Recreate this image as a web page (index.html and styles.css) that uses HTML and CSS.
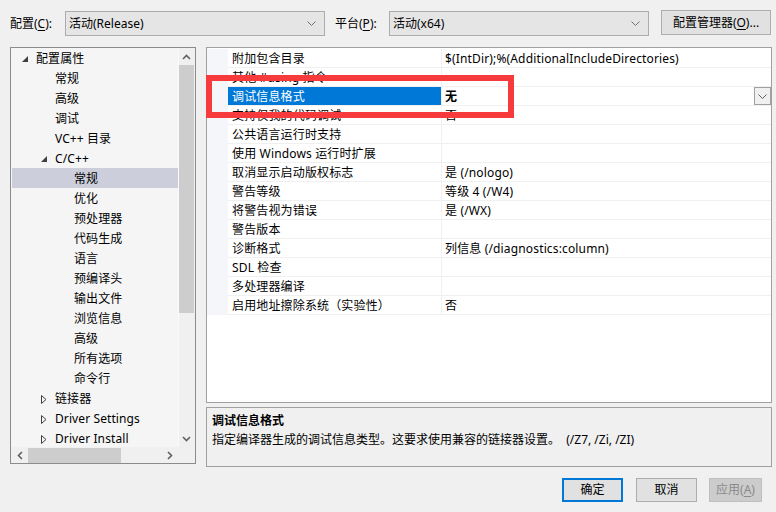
FILE: index.html
```html
<!DOCTYPE html>
<html lang="zh-CN">
<head>
<meta charset="utf-8">
<title>属性页</title>
<link rel="stylesheet" href="styles.css">
</head>
<body>
<div class="dialog">
  <div class="topbar">
    <span class="lbl lbl-cfg">配置(<u>C</u>):</span>
    <div class="combo combo-cfg">
      <span class="combo-text">活动(Release)</span>
      <svg class="chev" width="9" height="5" viewBox="0 0 9 5"><path d="M0.5 0.5 L4.5 4.5 L8.5 0.5" fill="none" stroke="#707070" stroke-width="1"/></svg>
    </div>
    <span class="lbl lbl-plat">平台(<u>P</u>):</span>
    <div class="combo combo-plat">
      <span class="combo-text">活动(x64)</span>
      <svg class="chev" width="9" height="5" viewBox="0 0 9 5"><path d="M0.5 0.5 L4.5 4.5 L8.5 0.5" fill="none" stroke="#707070" stroke-width="1"/></svg>
    </div>
    <div class="btn btn-mgr">配置管理器(<u>O</u>)...</div>
  </div>

  <div class="main">
    <div class="tree">
      <div class="tree-body">
        <div class="node l0"><span class="slot"><svg width="6" height="6" viewBox="0 0 6 6"><path d="M6 0 L6 6 L0 6 Z" fill="#404040"/></svg></span>配置属性</div>
        <div class="node l1"><span class="slot"></span>常规</div>
        <div class="node l1"><span class="slot"></span>高级</div>
        <div class="node l1"><span class="slot"></span>调试</div>
        <div class="node l1"><span class="slot"></span>VC++ 目录</div>
        <div class="node l1"><span class="slot"><svg width="6" height="6" viewBox="0 0 6 6"><path d="M6 0 L6 6 L0 6 Z" fill="#404040"/></svg></span>C/C++</div>
        <div class="node l2 sel"><span class="slot"></span>常规</div>
        <div class="node l2"><span class="slot"></span>优化</div>
        <div class="node l2"><span class="slot"></span>预处理器</div>
        <div class="node l2"><span class="slot"></span>代码生成</div>
        <div class="node l2"><span class="slot"></span>语言</div>
        <div class="node l2"><span class="slot"></span>预编译头</div>
        <div class="node l2"><span class="slot"></span>输出文件</div>
        <div class="node l2"><span class="slot"></span>浏览信息</div>
        <div class="node l2"><span class="slot"></span>高级</div>
        <div class="node l2"><span class="slot"></span>所有选项</div>
        <div class="node l2"><span class="slot"></span>命令行</div>
        <div class="node l1"><span class="slot"><svg width="6" height="9" viewBox="0 0 6 9"><path d="M0.5 0.5 L5 4.5 L0.5 8.5 Z" fill="none" stroke="#404040" stroke-width="1"/></svg></span>链接器</div>
        <div class="node l1"><span class="slot"><svg width="6" height="9" viewBox="0 0 6 9"><path d="M0.5 0.5 L5 4.5 L0.5 8.5 Z" fill="none" stroke="#404040" stroke-width="1"/></svg></span>Driver Settings</div>
        <div class="node l1"><span class="slot"><svg width="6" height="9" viewBox="0 0 6 9"><path d="M0.5 0.5 L5 4.5 L0.5 8.5 Z" fill="none" stroke="#404040" stroke-width="1"/></svg></span>Driver Install</div>
      </div>
      <div class="vscroll">
        <div class="sarrow"><svg width="9" height="6" viewBox="0 0 9 6"><path d="M1 5 L4.5 1.5 L8 5" fill="none" stroke="#606060" stroke-width="1.6"/></svg></div>
        <div class="vthumb"></div>
        <div class="vtrack"></div>
        <div class="sarrow"><svg width="9" height="6" viewBox="0 0 9 6"><path d="M1 1 L4.5 4.5 L8 1" fill="none" stroke="#606060" stroke-width="1.6"/></svg></div>
      </div>
      <div class="hscroll">
        <div class="harrow"><svg width="6" height="9" viewBox="0 0 6 9"><path d="M5 1 L1.5 4.5 L5 8" fill="none" stroke="#606060" stroke-width="1.6"/></svg></div>
        <div class="hthumb"></div>
        <div class="htrack"></div>
        <div class="harrow"><svg width="6" height="9" viewBox="0 0 6 9"><path d="M1 1 L4.5 4.5 L1 8" fill="none" stroke="#606060" stroke-width="1.6"/></svg></div>
      </div>
      <div class="corner"></div>
    </div>

    <div class="right">
      <div class="grid">
        <div class="row"><div class="gut"></div><div class="name">附加包含目录</div><div class="val">$(IntDir);%(AdditionalIncludeDirectories)</div></div>
        <div class="row"><div class="gut"></div><div class="name">其他 #using 指令</div><div class="val"></div></div>
        <div class="row selrow"><div class="gut"></div><div class="name">调试信息格式</div><div class="val"><b>无</b><span class="ddbtn"><svg width="9" height="5" viewBox="0 0 9 5"><path d="M0.5 0.5 L4.5 4.5 L8.5 0.5" fill="none" stroke="#606060" stroke-width="1"/></svg></span></div></div>
        <div class="row"><div class="gut"></div><div class="name">支持仅我的代码调试</div><div class="val">否</div></div>
        <div class="row"><div class="gut"></div><div class="name">公共语言运行时支持</div><div class="val"></div></div>
        <div class="row"><div class="gut"></div><div class="name">使用 Windows 运行时扩展</div><div class="val"></div></div>
        <div class="row"><div class="gut"></div><div class="name">取消显示启动版权标志</div><div class="val">是 (/nologo)</div></div>
        <div class="row"><div class="gut"></div><div class="name">警告等级</div><div class="val">等级 4 (/W4)</div></div>
        <div class="row"><div class="gut"></div><div class="name">将警告视为错误</div><div class="val">是 (/WX)</div></div>
        <div class="row"><div class="gut"></div><div class="name">警告版本</div><div class="val"></div></div>
        <div class="row"><div class="gut"></div><div class="name">诊断格式</div><div class="val">列信息 (/diagnostics:column)</div></div>
        <div class="row"><div class="gut"></div><div class="name">SDL 检查</div><div class="val"></div></div>
        <div class="row"><div class="gut"></div><div class="name">多处理器编译</div><div class="val"></div></div>
        <div class="row"><div class="gut"></div><div class="name">启用地址擦除系统（实验性）</div><div class="val">否</div></div>
        <div class="redbox"></div>
      </div>
      <div class="desc">
        <div class="desc-title">调试信息格式</div>
        <div class="desc-text">指定编译器生成的调试信息类型。这要求使用兼容的链接器设置。&nbsp; (/Z7, /Zi, /ZI)</div>
      </div>
    </div>
  </div>

  <div class="footer">
    <div class="btn btn-ok">确定</div>
    <div class="btn btn-cancel">取消</div>
    <div class="btn btn-apply">应用(<u>A</u>)</div>
  </div>
</div>
</body>
</html>
```

FILE: styles.css
```css
* { box-sizing: border-box; }
html, body {
  margin: 0;
  padding: 0;
  background: #f0f0f0;
}
body {
  width: 776px;
  height: 512px;
  overflow: hidden;
  font-family: "Noto Sans", "Noto Sans CJK SC", sans-serif;
  font-size: 12px;
  line-height: 16px;
  color: #000;
}
u { text-decoration: underline; text-underline-offset: 2px; }

.dialog { width: 776px; height: 512px; }

/* top bar */
.topbar {
  height: 36px;
  padding: 10px 0 0 10px;
  display: flex;
  align-items: flex-start;
}
.lbl {
  height: 25px;
  display: flex;
  align-items: center;
  margin-top: 1px;
}
.lbl-cfg { width: 55px; }
.lbl-plat { width: 54px; margin-left: 10px; }
.combo {
  width: 260px;
  height: 25px;
  margin-top: 1px;
  background: #e5e5e5;
  border: 1px solid #acacac;
  display: flex;
  align-items: center;
  padding: 0 8px 0 3px;
}
.combo-text { flex: 1; }
.chev { display: block; }
.btn {
  height: 25px;
  background: #e1e1e1;
  border: 1px solid #adadad;
  display: flex;
  align-items: center;
  justify-content: center;
}
.btn-mgr { width: 110px; margin-left: 12px; }

/* main */
.main {
  margin-top: 11px;
  padding-left: 10px;
  display: flex;
  height: 420px;
}
.tree {
  width: 186px;
  height: 417px;
  border: 1px solid #8c8c8c;
  background: #f5f5f5;
  display: grid;
  grid-template-columns: 1fr 17px;
  grid-template-rows: 1fr 16px;
}
.tree-body {
  padding-left: 1px;
  overflow: hidden;
}
.node {
  height: 20px;
  padding-top: 2px;
  display: flex;
  align-items: center;
  white-space: nowrap;
  letter-spacing: 0.1px;
}
.node.l0 { padding-left: 10px; }
.node.l1 { padding-left: 29px; }
.node.l2 { padding-left: 48px; }
.node.sel { background: #cccedb; }
.slot {
  width: 14px;
  height: 18px;
  display: flex;
  align-items: center;
}
.slot svg { display: block; }

.vscroll {
  display: flex;
  flex-direction: column;
  background: #f0f0f0;
  border-left: 1px solid #fafafa;
}
.sarrow {
  height: 17px;
  width: 15px;
  display: flex;
  align-items: center;
  justify-content: center;
}
.vthumb { width: 15px; height: 248px; background: #cdcdcd; }
.vtrack { flex: 1; }
.hscroll {
  display: flex;
  align-items: stretch;
  background: #f0f0f0;
  padding-top: 1px;
}
.harrow {
  width: 17px;
  display: flex;
  align-items: center;
  justify-content: center;
}
.hthumb { width: 93px; background: #cdcdcd; }
.htrack { flex: 1; }
.corner { background: #f0f0f0; }

.right {
  margin-left: 10px;
  width: 566px;
  display: flex;
  flex-direction: column;
}
.grid {
  position: relative;
  height: 356px;
  background: #fff;
  border: 1px solid #a0a0a0;
  padding-top: 1px;
}
.row {
  display: grid;
  grid-template-columns: 21px 214px 1fr;
  height: 19px;
}
.gut { background: #f4f6fa; }
.name, .val {
  border-bottom: 1px solid #f0f0f0;
  display: flex;
  align-items: center;
  white-space: nowrap;
  overflow: hidden;
  padding-top: 2px;
  letter-spacing: 0.15px;
}
.name {
  padding-left: 4px;
  border-right: 1px solid #f0f0f0;
}
.val { padding-left: 3px; }
.selrow .name { background: #0078d7; color: #fff; }
.selrow .val { padding-top: 0; }
.selrow .val b { font-weight: bold; padding-top: 2px; }
.ddbtn {
  margin-left: auto;
  width: 17px;
  height: 18px;
  border: 1px solid #a0a0a0;
  background: #f0f0f0;
  display: flex;
  align-items: center;
  justify-content: center;
}
.redbox {
  position: absolute;
  left: -1px;
  top: 27px;
  width: 308px;
  height: 43px;
  border: 6px solid #f73a3c;
}

.desc {
  margin-top: 4px;
  height: 60px;
  border: 1px solid #a0a0a0;
  background: #f0f0f0;
  padding: 3px 0 0 5px;
}
.desc-title { font-weight: bold; height: 19px; line-height: 19px; }
.desc-text { height: 19px; line-height: 19px; }

/* footer */
.footer {
  margin-top: 11px;
  display: flex;
  justify-content: flex-end;
  padding-right: 14px;
}
.footer .btn { height: 24px; }
.btn-ok { width: 61px; border: 2px solid #0078d7; }
.btn-cancel { width: 61px; margin-left: 13px; }
.btn-apply {
  width: 53px;
  margin-left: 12px;
  background: #cccccc;
  border-color: #bfbfbf;
  color: #8a8a8a;
}
```
